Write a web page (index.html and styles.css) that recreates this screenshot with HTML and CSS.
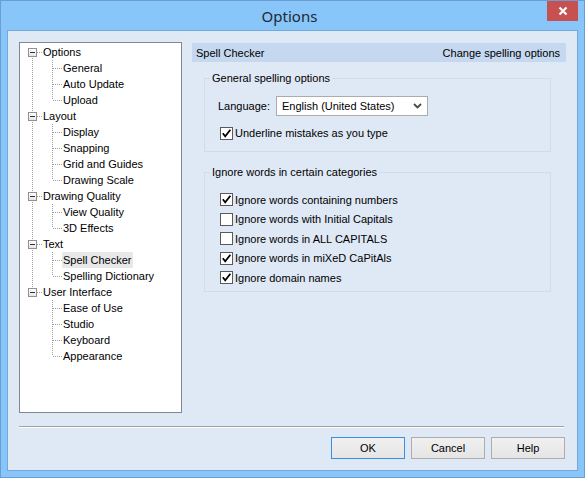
FILE: index.html
```html
<html>
<head>
  <title>Options</title>
  <link rel="stylesheet" href="styles.css">
</head>
<body>
  <div class="window">
    <div class="titlebar">
      <span class="title">Options</span>
      <span class="close">
        <svg width="10" height="10" viewBox="0 0 10 10"><path d="M1.5 1.5 L8.5 8.5 M8.5 1.5 L1.5 8.5" stroke="#fff" stroke-width="2.2" fill="none"/></svg>
      </span>
    </div>

    <div class="client">
      <div class="main">
        <div class="tree">
          <div class="node first">
            <div class="rail"><span class="toggle"></span></div>
            <div class="branch">
              <div class="label">Options</div>
              <div class="leaf"><span class="elbow"></span><span class="label">General</span></div>
              <div class="leaf"><span class="elbow"></span><span class="label">Auto Update</span></div>
              <div class="leaf last"><span class="elbow"></span><span class="label">Upload</span></div>
            </div>
          </div>
          <div class="node">
            <div class="rail"><span class="toggle"></span></div>
            <div class="branch">
              <div class="label">Layout</div>
              <div class="leaf"><span class="elbow"></span><span class="label">Display</span></div>
              <div class="leaf"><span class="elbow"></span><span class="label">Snapping</span></div>
              <div class="leaf"><span class="elbow"></span><span class="label">Grid and Guides</span></div>
              <div class="leaf last"><span class="elbow"></span><span class="label">Drawing Scale</span></div>
            </div>
          </div>
          <div class="node">
            <div class="rail"><span class="toggle"></span></div>
            <div class="branch">
              <div class="label">Drawing Quality</div>
              <div class="leaf"><span class="elbow"></span><span class="label">View Quality</span></div>
              <div class="leaf last"><span class="elbow"></span><span class="label">3D Effects</span></div>
            </div>
          </div>
          <div class="node">
            <div class="rail"><span class="toggle"></span></div>
            <div class="branch">
              <div class="label">Text</div>
              <div class="leaf"><span class="elbow"></span><span class="label selected">Spell Checker</span></div>
              <div class="leaf last"><span class="elbow"></span><span class="label">Spelling Dictionary</span></div>
            </div>
          </div>
          <div class="node last">
            <div class="rail"><span class="toggle"></span></div>
            <div class="branch">
              <div class="label">User Interface</div>
              <div class="leaf"><span class="elbow"></span><span class="label">Ease of Use</span></div>
              <div class="leaf"><span class="elbow"></span><span class="label">Studio</span></div>
              <div class="leaf"><span class="elbow"></span><span class="label">Keyboard</span></div>
              <div class="leaf last"><span class="elbow"></span><span class="label">Appearance</span></div>
            </div>
          </div>
        </div>

        <div class="panel">
          <div class="panel-head">
            <span>Spell Checker</span>
            <span>Change spelling options</span>
          </div>

          <fieldset class="group general">
            <legend>General spelling options</legend>
            <div class="lang-row">
              <span class="lang-label">Language:</span>
              <div class="combo">
                <span>English (United States)</span>
                <svg width="9" height="6" viewBox="0 0 9 6"><path d="M1 1 L4.5 4.5 L8 1" stroke="#4a4a4a" stroke-width="1.8" fill="none"/></svg>
              </div>
            </div>
            <label class="check underline">
              <span class="box"><svg width="11" height="11" viewBox="0 0 11 11"><path d="M1.8 5.2 L4.2 8.2 L9.4 1.8" stroke="#000" stroke-width="1.8" fill="none"/></svg></span>
              Underline mistakes as you type
            </label>
          </fieldset>

          <fieldset class="group ignore">
            <legend>Ignore words in certain categories</legend>
            <label class="check">
              <span class="box"><svg width="11" height="11" viewBox="0 0 11 11"><path d="M1.8 5.2 L4.2 8.2 L9.4 1.8" stroke="#000" stroke-width="1.8" fill="none"/></svg></span>
              Ignore words containing numbers
            </label>
            <label class="check">
              <span class="box"></span>
              Ignore words with Initial Capitals
            </label>
            <label class="check">
              <span class="box"></span>
              Ignore words in ALL CAPITALS
            </label>
            <label class="check">
              <span class="box"><svg width="11" height="11" viewBox="0 0 11 11"><path d="M1.8 5.2 L4.2 8.2 L9.4 1.8" stroke="#000" stroke-width="1.8" fill="none"/></svg></span>
              Ignore words in miXeD CaPitAls
            </label>
            <label class="check">
              <span class="box"><svg width="11" height="11" viewBox="0 0 11 11"><path d="M1.8 5.2 L4.2 8.2 L9.4 1.8" stroke="#000" stroke-width="1.8" fill="none"/></svg></span>
              Ignore domain names
            </label>
          </fieldset>
        </div>
      </div>

      <div class="separator"></div>

      <div class="buttons">
        <button class="default">OK</button>
        <button>Cancel</button>
        <button>Help</button>
      </div>
    </div>
  </div>
</body>
</html>
```

FILE: styles.css
```css
body {
  margin: 0;
  font-family: "Liberation Sans", Arial, sans-serif;
  font-size: 11px;
  color: #000;
}
.window {
  width: 585px;
  height: 478px;
  box-sizing: border-box;
  border: 1px solid #6c9dd2;
  background: #88c5f8;
  display: flex;
  flex-direction: column;
}
.titlebar {
  height: 29px;
  flex: none;
  display: grid;
  grid-template-columns: 1fr auto 1fr;
  padding-right: 6px;
}
.title {
  grid-column: 2;
  font-family: "Noto Sans", "Open Sans", sans-serif;
  font-size: 15px;
  line-height: 31px;
  color: #1e2a36;
}
.close {
  grid-column: 3;
  justify-self: end;
  width: 31px;
  height: 20px;
  background: #c75050;
  display: flex;
  align-items: center;
  justify-content: center;
}
.client {
  flex: 1;
  margin: 0 6px 6px 6px;
  border: 1px solid #74a7dc;
  background: #dfe8f5;
  padding: 11px 11px 0 11px;
}
.main {
  display: flex;
  gap: 10px;
}

/* tree */
.tree {
  width: 163px;
  height: 371px;
  box-sizing: border-box;
  border: 1px solid #828790;
  background: #fff;
  padding-top: 1px;
}
.node {
  display: flex;
}
.rail {
  width: 23px;
  flex: none;
  background:
    repeating-linear-gradient(to right, #a0a0a0 0 1px, transparent 1px 2px) 17px 8px / 6px 1px no-repeat,
    repeating-linear-gradient(to bottom, #a0a0a0 0 1px, transparent 1px 2px) 12px 0 / 1px 100% no-repeat;
}
.node.first .rail {
  background:
    repeating-linear-gradient(to right, #a0a0a0 0 1px, transparent 1px 2px) 17px 8px / 6px 1px no-repeat,
    repeating-linear-gradient(to bottom, #a0a0a0 0 1px, transparent 1px 2px) 12px 8px / 1px 100% no-repeat;
}
.node.last .rail {
  background:
    repeating-linear-gradient(to right, #a0a0a0 0 1px, transparent 1px 2px) 17px 8px / 6px 1px no-repeat,
    repeating-linear-gradient(to bottom, #a0a0a0 0 1px, transparent 1px 2px) 12px 0 / 1px 8px no-repeat;
}
.toggle {
  display: block;
  width: 9px;
  height: 9px;
  box-sizing: border-box;
  margin: 4px 0 0 8px;
  border: 1px solid #919191;
  background: linear-gradient(#333, #333) center / 5px 1px no-repeat, linear-gradient(#fff, #e6e6e6);
}
.branch {
  flex: 1;
}
.label {
  height: 16px;
  line-height: 16px;
  white-space: nowrap;
}
.leaf {
  display: flex;
  height: 16px;
  padding-left: 9px;
}
.elbow {
  width: 10px;
  flex: none;
  background:
    repeating-linear-gradient(to right, #a0a0a0 0 1px, transparent 1px 2px) 1px 8px / 9px 1px no-repeat,
    repeating-linear-gradient(to bottom, #a0a0a0 0 1px, transparent 1px 2px) 0 0 / 1px 100% no-repeat;
}
.leaf.last .elbow {
  background:
    repeating-linear-gradient(to right, #a0a0a0 0 1px, transparent 1px 2px) 1px 8px / 9px 1px no-repeat,
    repeating-linear-gradient(to bottom, #a0a0a0 0 1px, transparent 1px 2px) 0 0 / 1px 8px no-repeat;
}
.leaf .label {
  padding: 0 2px 0 1px;
}
.label.selected {
  background: #e8e8e8;
}

/* right side */
.panel {
  flex: 1;
  display: flex;
  flex-direction: column;
}
.panel-head {
  margin-top: 1px;
  height: 19px;
  background: #c5d8ef;
  display: flex;
  justify-content: space-between;
  align-items: center;
  padding: 0 6px 0 4px;
}
.group {
  margin: 0 15px 0 12px;
  border: 1px solid #d3dbe5;
  padding: 0 5px;
  min-width: 0;
}
.group legend {
  padding: 0 2px;
  line-height: 14px;
}
.general {
  margin-top: 9px;
  padding-top: 11px;
  padding-bottom: 11px;
}
.ignore {
  margin-top: 13px;
  padding-top: 11px;
  padding-bottom: 3px;
}
.lang-row {
  display: flex;
  align-items: center;
  margin-left: 8px;
}
.lang-label {
  width: 58px;
}
.combo {
  width: 152px;
  height: 20px;
  box-sizing: border-box;
  border: 1px solid #acacac;
  background: #fff;
  display: flex;
  align-items: center;
  justify-content: space-between;
  padding: 0 5px 0 5px;
}
.check {
  display: flex;
  align-items: center;
  height: 19.5px;
  margin-left: 10px;
  white-space: nowrap;
}
.check.underline {
  height: 14px;
  margin-top: 10px;
}
.box {
  width: 13px;
  height: 13px;
  box-sizing: border-box;
  border: 1px solid #5a5a5a;
  background: #fff;
  margin-right: 2px;
  flex: none;
}
.box svg {
  display: block;
}

/* bottom */
.separator {
  margin: 13px 2px 0 0;
  border-top: 1px solid #a0a0a0;
  border-bottom: 1px solid #fff;
}
.buttons {
  display: flex;
  justify-content: flex-end;
  gap: 6px;
  margin: 9px 1px 0 0;
}
.buttons button {
  width: 74px;
  height: 22px;
  border: 1px solid #acacac;
  background: linear-gradient(#f0f0f0, #e5e5e5);
  font-family: "Liberation Sans", Arial, sans-serif;
  font-size: 11px;
  color: #000;
  padding: 0;
}
.buttons button.default {
  border-color: #3c8fdf;
}
```
